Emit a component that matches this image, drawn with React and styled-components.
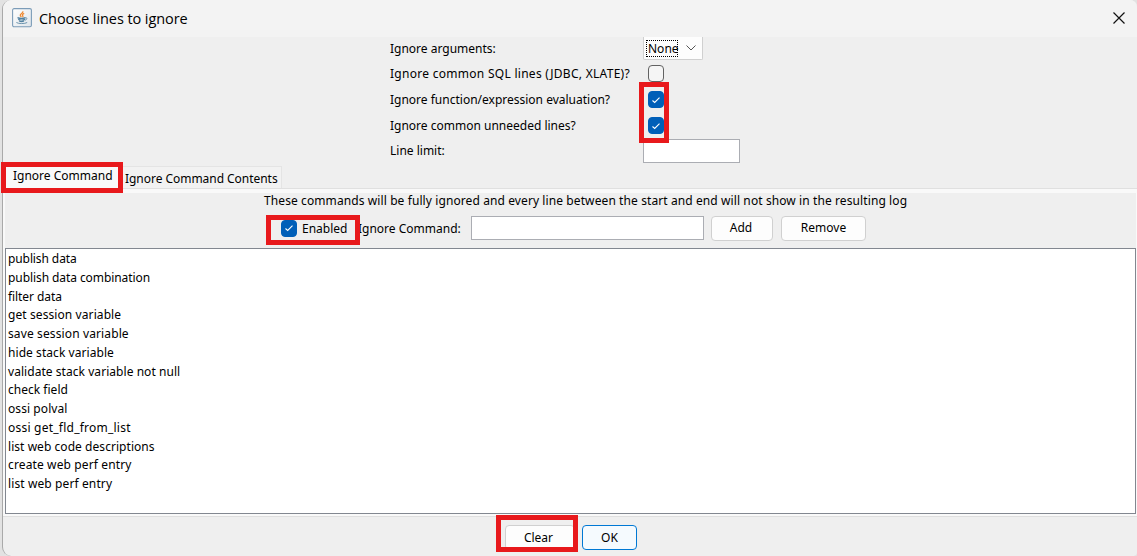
import React from "react";
import styled, { createGlobalStyle } from "styled-components";

const Global = createGlobalStyle`
  * { box-sizing: border-box; }
  body { margin: 0; background: #e2e2e2; overflow: hidden; }
`;

const Dialog = styled.div`
  width: 1135px;
  height: 556px;
  margin-left: 2px;
  display: flex;
  flex-direction: column;
  border-left: 1px solid #a9a9a9;
  border-radius: 9px 7px 4px 9px;
  overflow: hidden;
  background: #efefef;
  color: #000;
  font: 12px/16px "Noto Sans", sans-serif;
  white-space: nowrap;
`;

const TitleBar = styled.header`
  height: 37px;
  flex: none;
  display: flex;
  align-items: center;
  padding: 0 12px 1px 9px;
  background: #f3f3f3;
`;

const Title = styled.h1`
  flex: 1;
  margin: 2px 0 0 7px;
  font: 400 14.5px/20px "Open Sans", sans-serif;
  letter-spacing: ${(p) => p.$track}px;
`;

const Text = styled.span`
  letter-spacing: ${(p) => p.$track || 0}px;
`;

const Form = styled.section`
  flex: none;
  display: grid;
  grid-template-columns: 253px 97px;
  grid-template-rows: 23px 27px 25px 27px 24px;
  align-items: center;
  padding-left: 387px;
  height: 126px;
`;

const Combo = styled.div`
  width: 60px;
  height: 23px;
  display: flex;
  align-items: center;
  justify-content: space-between;
  padding: 0 6px 0 2px;
  background: #fdfdfd;
  border: 1px solid #d0d0d0;
  border-top: 0;
  border-radius: 0 0 2px 2px;
`;

const Focus = styled.span`
  width: 32px;
  height: 17px;
  line-height: 15px;
  padding-left: 1px;
  border: 1px dotted #000;
`;

const Box = styled.span`
  width: 16px;
  height: 17px;
  flex: none;
  display: flex;
  align-items: center;
  justify-content: center;
  margin-left: ${(p) => p.$indent || 0}px;
  border: 1px solid ${(p) => (p.$on ? "#005fb8" : "#626262")};
  border-radius: 4px;
  background: ${(p) => (p.$on ? "#005fb8" : "#f5f5f5")};
`;

const Field = styled.input`
  width: ${(p) => p.$w}px;
  height: 24px;
  padding: 0 4px;
  border: 1px solid #abadb3;
  background: #fff;
  font: inherit;
  outline: none;
`;

const Tabs = styled.nav`
  height: 26px;
  flex: none;
  display: flex;
  align-items: flex-end;
  border-bottom: 1px solid #e0e0e0;
`;

const Tab = styled.div`
  width: ${(p) => p.$w}px;
  height: ${(p) => (p.$active ? 25 : 22)}px;
  padding: ${(p) => (p.$active ? "4px 0 0 10px" : "4px 0 0 2px")};
  background: ${(p) => (p.$active ? "#f9f9f9" : "#f2f2f2")};
  border: 1px solid #e4e4e4;
  border-width: 1px 1px 0 0;
`;

const Pane = styled.main`
  height: 327px;
  flex: none;
  display: flex;
  flex-direction: column;
  border: solid #f9f9f9;
  border-width: 4px 1px 2px 2px;
`;

const Hint = styled.p`
  margin: 0;
  height: 16px;
  padding-left: 259px;
`;

const Controls = styled.div`
  height: 39px;
  display: flex;
  align-items: center;
  padding: 0 0 1px 276px;
`;

const EnabledLabel = styled.span`
  width: 56px;
  padding-top: 1px;
  margin-left: 5px;
`;

const CommandLabel = styled.span`
  width: 113px;
  padding-top: 1px;
`;

const Button = styled.button`
  width: ${(p) => p.$w}px;
  height: 25px;
  margin: 0 0 0 ${(p) => p.$gap || 0}px;
  padding: 0 ${(p) => p.$inset || 0}px 0 0;
  border: 1px solid ${(p) => (p.$primary ? "#0078d4" : "#d0d0d0")};
  border-radius: 4px;
  background: ${(p) => (p.$primary ? "#f5fafe" : "#fdfdfd")};
  color: #000;
  font: inherit;
`;

const List = styled.ul`
  flex: 1;
  margin: 0;
  padding: 1px 2px;
  list-style: none;
  background: #fff;
  border: 1px solid #828790;
`;

const Item = styled.li`
  height: 18.75px;
  line-height: 18.75px;
  letter-spacing: ${(p) => p.$track}px;
`;

const Footer = styled.footer`
  flex: 1;
  display: flex;
  align-items: flex-start;
  padding: 8px 0 0 502px;
  border-top: 1px solid #dfdfdf;
`;

const Marker = styled.div`
  position: absolute;
  left: ${(p) => p.$x}px;
  top: ${(p) => p.$y}px;
  width: ${(p) => p.$w}px;
  height: ${(p) => p.$h}px;
  border: 5px solid #e8191c;
  pointer-events: none;
`;

const JavaIcon = () => (
  <svg width="20" height="20" viewBox="0 0 20 20" fill="none">
    <defs>
      <linearGradient id="cup" x1="0" y1="0" x2="1" y2="1">
        <stop offset="0" stopColor="#fff" />
        <stop offset="1" stopColor="#dfe5ea" />
      </linearGradient>
    </defs>
    <rect x="0.6" y="0.6" width="18.8" height="18.2" rx="1.5" fill="url(#cup)" stroke="#7c9cb8" strokeWidth="1.1" />
    <path d="M10.8 3.2c.8 2-3.2 2.6-2.5 4.3.2.6.8 1 1 1.6M12.2 5.4c-2 .9-2.2 1.6-1.4 2.4.4.5 0 1-.4 1.3" stroke="#ee8b35" strokeWidth="1.3" />
    <path d="M5.5 9.6c2 .8 6 .8 8 0M6.2 11.4c2 .7 4.8.7 6.8 0M7 13c1.5.6 3.8.6 5 0" stroke="#5382a1" strokeWidth="1.2" />
    <path d="M13.3 9.8c2.2-.5 2.2 1.8-.5 2.5M4.4 14.5c2 1.4 8.5 1.4 10.8 0" stroke="#6b93ae" />
  </svg>
);

const Check = () => (
  <svg width="10" height="10" viewBox="0 0 10 10" fill="none">
    <path d="M1.5 5.5L3.7 7.5L8.5 2.7" stroke="#fff" strokeWidth="1.1" />
  </svg>
);

const items = [
  ["publish data", -0.1],
  ["publish data combination", -0.08],
  ["filter data", -0.08],
  ["get session variable", 0.09],
  ["save session variable", 0.12],
  ["hide stack variable", 0.06],
  ["validate stack variable not null", 0.05],
  ["check field", 0.02],
  ["ossi polval", 0.08],
  ["ossi get_fld_from_list", 0.23],
  ["list web code descriptions", 0.05],
  ["create web perf entry", 0.13],
  ["list web perf entry", 0.11],
];

export default function App() {
  return (
    <>
      <Global />
      <Dialog>
        <TitleBar>
          <JavaIcon />
          <Title $track={-0.07}>Choose lines to ignore</Title>
          <svg width="12" height="12" viewBox="0 0 12 12">
            <path d="M0.5 0.5L11.5 11.5M11.5 0.5L0.5 11.5" stroke="#111" strokeWidth="1.2" />
          </svg>
        </TitleBar>
        <Form>
          <Text>Ignore arguments:</Text>
          <Combo>
            <Focus>None</Focus>
            <svg width="10" height="6" viewBox="0 0 10 6" fill="none">
              <path d="M0.5 0.5L5 5L9.5 0.5" stroke="#555" />
            </svg>
          </Combo>
          <Text $track={0.28}>Ignore common SQL lines (JDBC, XLATE)?</Text>
          <Box $indent={5} />
          <Text>Ignore function/expression evaluation?</Text>
          <Box $on $indent={5}><Check /></Box>
          <Text>Ignore common unneeded lines?</Text>
          <Box $on $indent={5}><Check /></Box>
          <Text>Line limit:</Text>
          <Field $w={97} />
        </Form>
        <Tabs>
          <Tab $active $w={120}><Text>Ignore Command</Text></Tab>
          <Tab $w={159}><Text $track={-0.04}>Ignore Command Contents</Text></Tab>
        </Tabs>
        <Pane>
          <Hint>
            <Text $track={0.097}>These commands will be fully ignored and every line between the start and end will not show in the resulting log</Text>
          </Hint>
          <Controls>
            <Box $on><Check /></Box>
            <EnabledLabel><Text>Enabled</Text></EnabledLabel>
            <CommandLabel><Text>Ignore Command:</Text></CommandLabel>
            <Field $w={233} />
            <Button $w={62} $gap={7} $inset={2}>Add</Button>
            <Button $w={85} $gap={8}>Remove</Button>
          </Controls>
          <List>
            {items.map(([name, track]) => (
              <Item key={name} $track={track}>{name}</Item>
            ))}
          </List>
        </Pane>
        <Footer>
          <Button $w={70} $inset={3}>Clear</Button>
          <Button $w={55} $gap={7} $primary>OK</Button>
        </Footer>
      </Dialog>
      <Marker $x={639} $y={82} $w={30} $h={61} />
      <Marker $x={1} $y={162} $w={122} $h={31} />
      <Marker $x={266} $y={215} $w={94} $h={30} />
      <Marker $x={496} $y={515} $w={82} $h={37} />
    </>
  );
}
